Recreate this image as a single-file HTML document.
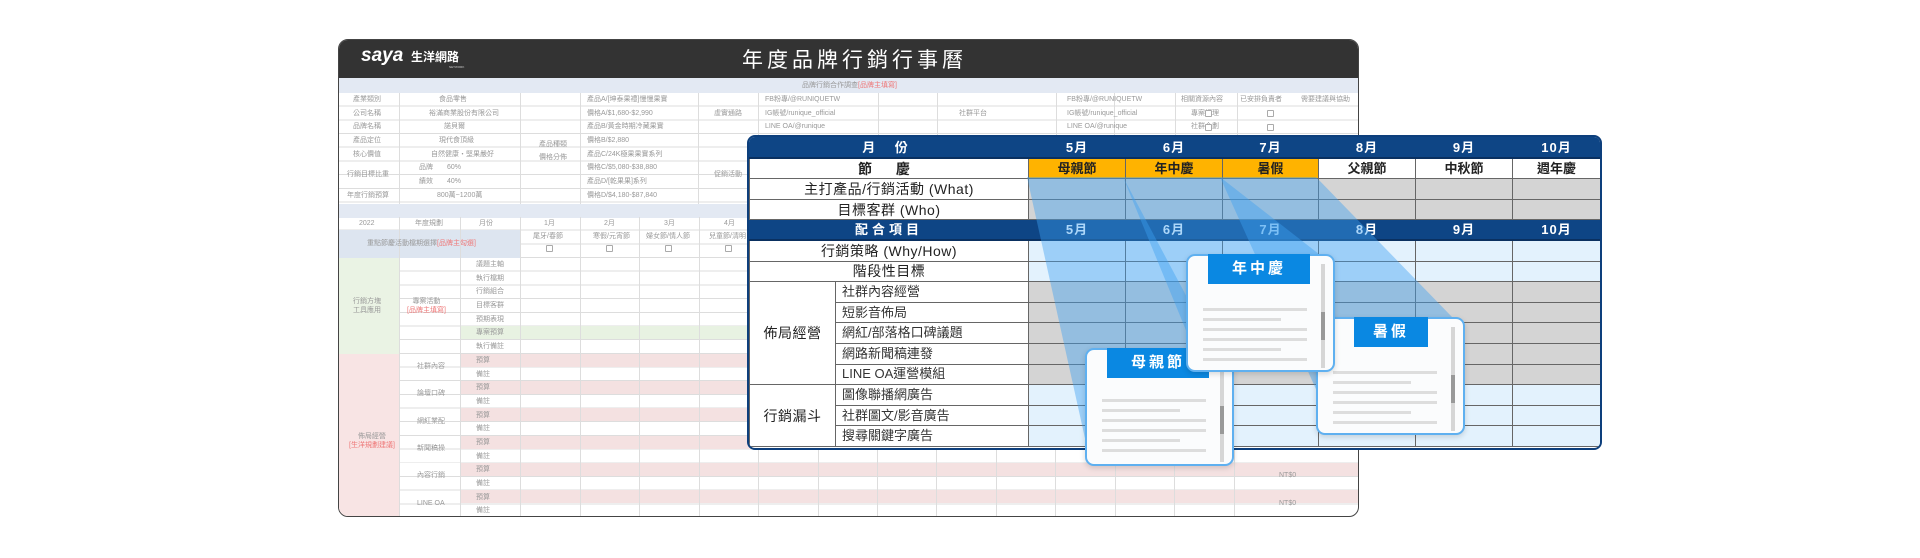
<!DOCTYPE html>
<html><head><meta charset="utf-8">
<style>
*{margin:0;padding:0;box-sizing:border-box}
body{width:1920px;height:558px;background:#fff;position:relative;overflow:hidden;font-family:"Liberation Sans","Noto Sans CJK TC",sans-serif}
.a{position:absolute}
#back{left:338px;top:39px;width:1021px;height:478px;border:1px solid #444;border-radius:10px;overflow:hidden;background:#fff}
#hdr{left:0;top:0;width:100%;height:38px;background:#333}
.t{position:absolute;font-size:7px;color:#999;white-space:nowrap;line-height:13px}
.tr{color:#e77}
.grid{background-image:repeating-linear-gradient(to bottom,transparent 0,transparent 12.7px,#ddd 12.7px,#ddd 13.68px)}
.vl{position:absolute;width:1px;background:#ddd}
.cb{position:absolute;width:7px;height:7px;border:1px solid #aaa;border-radius:1px;background:#fff}
#front{left:747px;top:135px;width:855px;height:315px;border:2px solid #0d3f7c;border-radius:8px;overflow:hidden;background:#fff}
table{border-collapse:collapse;table-layout:fixed;width:851px}
tr{height:20.6px}
td{border:1px solid #666;height:20.6px;font-size:13px;color:#222;text-align:center;padding:0;white-space:nowrap;line-height:16px;overflow:hidden}
tr.nv td{background:#0e4585;color:#fff;font-weight:bold;letter-spacing:1px;border-color:#0e4585;border-bottom:2px solid #0a3060}
td.g{background:#d4d4d4}
td.b{background:#e3f2fd}
td.o{background:#ffb300;font-weight:bold}
td.s{text-align:left;padding-left:6px;color:#333}
td.L{font-size:14px;letter-spacing:.5px}
.card{position:absolute;width:149px;height:118px;background:#fbfcfd;border:2px solid #5fb0f0;border-radius:9px;box-shadow:0 2px 6px rgba(0,0,0,.15)}
.tab{position:absolute;left:20px;top:-2px;width:102px;height:30px;background:#0a88e2;color:#fff;font-weight:bold;font-size:15px;letter-spacing:3px;text-align:center;line-height:30px}
.ln{position:absolute;left:15px;height:3px;background:#ddd}
.sb{position:absolute;right:8px;top:8px;width:4px;height:104px;background:#d6d6d6}
.sb i{position:absolute;left:0;top:48px;width:4px;height:28px;background:#999}
</style></head><body>

<div id="back" class="a">
 <div id="hdr" class="a">
  <div class="a" style="left:22px;top:5px;color:#fff;font-weight:bold;font-size:19px;font-style:italic">saya</div>
  <div class="a" style="left:72px;top:8px;color:#fff;font-weight:bold;font-size:12px">生洋網路</div>
  <div class="a" style="left:110px;top:25px;color:#ccc;font-size:3px">NETWORK</div>
  <div class="a" style="left:0;width:1021px;top:4px;text-align:center;color:#fff;font-size:21px;letter-spacing:4px;padding-left:10px">年度品牌行銷行事曆</div>
 </div>
 <div class="a" style="left:0;top:38px;width:1021px;height:15px;background:#e3e9f3"></div>
 <div class="t" style="left:0;width:1021px;text-align:center;top:39px">品牌行銷合作調查<span class="tr">[品牌主填寫]</span></div>
 <div class="a grid" style="left:0;top:53px;width:1021px;height:111px"></div>
 <div class="vl" style="left:60px;top:53px;height:111px"></div>
 <div class="vl" style="left:181px;top:53px;height:111px"></div>
 <div class="vl" style="left:241px;top:53px;height:111px"></div>
 <div class="vl" style="left:359px;top:53px;height:111px"></div>
 <div class="vl" style="left:419px;top:53px;height:111px"></div>
 <div class="vl" style="left:539px;top:53px;height:111px"></div>
 <div class="vl" style="left:598px;top:53px;height:111px"></div>
 <div class="vl" style="left:717px;top:53px;height:111px"></div>
 <div class="vl" style="left:775px;top:53px;height:111px"></div>
 <div class="vl" style="left:836px;top:53px;height:111px"></div>
 <div class="vl" style="left:898px;top:53px;height:111px"></div>
 <div class="t" style="left:14px;top:53px">產業類別</div><div class="t" style="left:100px;top:53px">食品零售</div>
 <div class="t" style="left:14px;top:67px">公司名稱</div><div class="t" style="left:90px;top:67px">裕滿商業股份有限公司</div>
 <div class="t" style="left:14px;top:80px">品牌名稱</div><div class="t" style="left:105px;top:80px">諾貝爾</div>
 <div class="t" style="left:14px;top:94px">產品定位</div><div class="t" style="left:100px;top:94px">現代食頂級</div>
 <div class="t" style="left:14px;top:108px">核心價值</div><div class="t" style="left:92px;top:108px">自然健康・堅果嚴好</div>
 <div class="t" style="left:8px;top:128px">行銷目標比重</div><div class="t" style="left:80px;top:121px">品牌　　60%</div><div class="t" style="left:80px;top:135px">績效　　40%</div>
 <div class="t" style="left:8px;top:149px">年度行銷預算</div><div class="t" style="left:98px;top:149px">800萬~1200萬</div>
 <div class="t" style="left:200px;top:98px">產品種類<br>價格分佈</div>
 <div class="t" style="left:248px;top:53px;line-height:13.68px">產品A/[坤泰果禮]慢慢果實<br>價格A/$1,680-$2,990<br>產品B/黃金時期冷藏果實<br>價格B/$2,880<br>產品C/24K極果果實系列<br>價格C/$5,080-$38,880<br>產品D/[乾果果]系列<br>價格D/$4,180-$87,840</div>
 <div class="t" style="left:375px;top:67px">虛實通路</div><div class="t" style="left:375px;top:128px">促銷活動</div>
 <div class="t" style="left:426px;top:53px;line-height:13.68px">FB粉專/@RUNIQUETW<br>IG帳號/runique_official<br>LINE OA/@runique</div>
 <div class="t" style="left:620px;top:67px">社群平台</div>
 <div class="t" style="left:728px;top:53px;line-height:13.68px">FB粉專/@RUNIQUETW<br>IG帳號/runique_official<br>LINE OA/@runique</div>
 <div class="t" style="left:842px;top:53px">相關資源內容</div><div class="t" style="left:852px;top:67px">專案經理</div><div class="t" style="left:852px;top:80px">社群企劃</div>
 <div class="t" style="left:901px;top:53px">已安排負責者</div><div class="t" style="left:962px;top:53px">需要建議與協助</div>
 <div class="cb" style="left:866px;top:70px"></div><div class="cb" style="left:866px;top:84px"></div>
 <div class="cb" style="left:928px;top:70px"></div><div class="cb" style="left:928px;top:84px"></div>
 <div class="a" style="left:0;top:164px;width:1021px;height:14px;background:#e3e9f3"></div>
 <div class="a grid" style="left:0;top:177px;width:1021px;height:301px"></div>
 <div class="a" style="left:0;top:190px;width:181px;height:28px;background:#dde5f0"></div>
 <div class="a" style="left:0;top:218px;width:60px;height:96px;background:#eaf3e4"></div>
 <div class="a" style="left:0;top:314px;width:60px;height:164px;background:#f8e4e4"></div>
 <div class="a" style="left:121px;top:286px;width:900px;height:13px;background:#e8f2e2"></div>
 <div class="a" style="left:121px;top:314px;width:900px;height:13px;background:#f4e1e1"></div>
 <div class="a" style="left:121px;top:341px;width:900px;height:13px;background:#f4e1e1"></div>
 <div class="a" style="left:121px;top:368px;width:900px;height:13px;background:#f4e1e1"></div>
 <div class="a" style="left:121px;top:396px;width:900px;height:13px;background:#f4e1e1"></div>
 <div class="a" style="left:121px;top:423px;width:900px;height:13px;background:#f4e1e1"></div>
 <div class="a" style="left:121px;top:450px;width:900px;height:13px;background:#f4e1e1"></div>
 <div class="vl" style="left:60px;top:177px;height:301px"></div>
 <div class="vl" style="left:121px;top:177px;height:301px"></div>
 <div class="vl" style="left:181px;top:177px;height:301px"></div>
 <div class="vl" style="left:241px;top:177px;height:301px"></div>
 <div class="vl" style="left:300px;top:177px;height:301px"></div>
 <div class="vl" style="left:360px;top:177px;height:301px"></div>
 <div class="vl" style="left:419px;top:177px;height:301px"></div>
 <div class="vl" style="left:479px;top:177px;height:301px"></div>
 <div class="vl" style="left:538px;top:177px;height:301px"></div>
 <div class="vl" style="left:597px;top:177px;height:301px"></div>
 <div class="vl" style="left:657px;top:177px;height:301px"></div>
 <div class="vl" style="left:716px;top:177px;height:301px"></div>
 <div class="vl" style="left:776px;top:177px;height:301px"></div>
 <div class="vl" style="left:835px;top:177px;height:301px"></div>
 <div class="vl" style="left:895px;top:177px;height:301px"></div>
 <div class="t" style="left:20px;top:177px">2022</div><div class="t" style="left:76px;top:177px">年度規劃</div><div class="t" style="left:140px;top:177px">月份</div>
 <div class="t" style="left:205px;top:177px">1月</div><div class="t" style="left:265px;top:177px">2月</div><div class="t" style="left:325px;top:177px">3月</div><div class="t" style="left:385px;top:177px">4月</div>
 <div class="t" style="left:194px;top:190px">尾牙/春節</div><div class="t" style="left:254px;top:190px">寒假/元宵節</div><div class="t" style="left:307px;top:190px">婦女節/情人節</div><div class="t" style="left:370px;top:190px">兒童節/清明</div>
 <div class="cb" style="left:207px;top:205px"></div><div class="cb" style="left:267px;top:205px"></div><div class="cb" style="left:326px;top:205px"></div><div class="cb" style="left:386px;top:205px"></div>
 <div class="t" style="left:28px;top:197px">重點節慶活動檔期選擇<span class="tr">[品牌主勾選]</span></div>
 <div class="t" style="left:137px;top:218px;line-height:13.68px">議題主軸<br>執行檔期<br>行銷組合<br>目標客群<br>預期表現<br>專案預算<br>執行備註<br>預算<br>備註<br>預算<br>備註<br>預算<br>備註<br>預算<br>備註<br>預算<br>備註<br>預算<br>備註</div>
 <div class="t" style="left:14px;top:257px;line-height:9px">行銷方塊<br>工具應用</div>
 <div class="t" style="left:68px;top:257px;line-height:9px;text-align:center">專案活動<br><span class="tr">[品牌主填寫]</span></div>
 <div class="t" style="left:10px;top:392px;line-height:9px;text-align:center">佈局經營<br><span class="tr">[生洋規劃建議]</span></div>
 <div class="t" style="left:78px;top:320px">社群內容</div><div class="t" style="left:78px;top:347px">論壇口碑</div><div class="t" style="left:78px;top:375px">網紅業配</div><div class="t" style="left:78px;top:402px">新聞稿操</div><div class="t" style="left:78px;top:429px">內容行銷</div><div class="t" style="left:78px;top:457px">LINE OA</div>
 <div class="t" style="left:940px;top:429px">NT$0</div><div class="t" style="left:940px;top:457px">NT$0</div>
</div>

<div id="front" class="a">
<table>
<colgroup><col style="width:86px"><col style="width:193px"><col style="width:97px"><col style="width:97px"><col style="width:96px"><col style="width:97px"><col style="width:97px"><col style="width:88px"></colgroup>
<tr class="nv"><td colspan="2" style="letter-spacing:8px">月 份</td><td>5月</td><td>6月</td><td>7月</td><td>8月</td><td>9月</td><td>10月</td></tr>
<tr><td colspan="2" class="L" style="letter-spacing:10px;font-weight:bold">節 慶</td><td class="o">母親節</td><td class="o">年中慶</td><td class="o">暑假</td><td style="font-weight:bold">父親節</td><td style="font-weight:bold">中秋節</td><td style="font-weight:bold">週年慶</td></tr>
<tr><td colspan="2" class="L">主打產品/行銷活動 (What)</td><td class="g"></td><td class="g"></td><td class="g"></td><td class="g"></td><td class="g"></td><td class="g"></td></tr>
<tr><td colspan="2" class="L">目標客群 (Who)</td><td class="g"></td><td class="g"></td><td class="g"></td><td class="g"></td><td class="g"></td><td class="g"></td></tr>
<tr class="nv"><td colspan="2" style="letter-spacing:4px">配合項目</td><td>5月</td><td>6月</td><td>7月</td><td>8月</td><td>9月</td><td>10月</td></tr>
<tr><td colspan="2" class="L">行銷策略 (Why/How)</td><td class="b"></td><td class="b"></td><td class="b"></td><td class="b"></td><td class="b"></td><td class="b"></td></tr>
<tr><td colspan="2" class="L">階段性目標</td><td class="b"></td><td class="b"></td><td class="b"></td><td class="b"></td><td class="b"></td><td class="b"></td></tr>
<tr><td rowspan="5" class="L">佈局經營</td><td class="s">社群內容經營</td><td class="g"></td><td class="g"></td><td class="g"></td><td class="g"></td><td class="g"></td><td class="g"></td></tr>
<tr><td class="s">短影音佈局</td><td class="g"></td><td class="g"></td><td class="g"></td><td class="g"></td><td class="g"></td><td class="g"></td></tr>
<tr><td class="s">網紅/部落格口碑議題</td><td class="g"></td><td class="g"></td><td class="g"></td><td class="g"></td><td class="g"></td><td class="g"></td></tr>
<tr><td class="s">網路新聞稿連發</td><td class="g"></td><td class="g"></td><td class="g"></td><td class="g"></td><td class="g"></td><td class="g"></td></tr>
<tr><td class="s">LINE OA運營模組</td><td class="g"></td><td class="g"></td><td class="g"></td><td class="g"></td><td class="g"></td><td class="g"></td></tr>
<tr><td rowspan="3" class="L">行銷漏斗</td><td class="s">圖像聯播網廣告</td><td class="b"></td><td class="b"></td><td class="b"></td><td class="b"></td><td class="b"></td><td class="b"></td></tr>
<tr><td class="s">社群圖文/影音廣告</td><td class="b"></td><td class="b"></td><td class="b"></td><td class="b"></td><td class="b"></td><td class="b"></td></tr>
<tr><td class="s">搜尋關鍵字廣告</td><td class="b"></td><td class="b"></td><td class="b"></td><td class="b"></td><td class="b"></td><td class="b"></td></tr>
</table>
</div>

<svg class="a" style="left:0;top:0" width="1920" height="558">
 <polygon points="1027,177 1123,177 1215,350 1088,452" fill="rgba(60,160,240,0.42)"/>
 <polygon points="1123,177 1220,177 1324,258 1190,340" fill="rgba(60,160,240,0.42)"/>
 <polygon points="1220,177 1316,177 1453,318 1320,398" fill="rgba(60,160,240,0.42)"/>
</svg>

<div class="card" style="left:1085px;top:348px">
 <div class="tab">母親節</div>
 <div class="ln" style="top:49px;width:104px"></div><div class="ln" style="top:59px;width:78px"></div><div class="ln" style="top:69px;width:104px"></div><div class="ln" style="top:79px;width:104px"></div><div class="ln" style="top:89px;width:78px"></div><div class="ln" style="top:99px;width:104px"></div>
 <div class="sb"><i></i></div>
</div>
<div class="card" style="left:1316px;top:317px">
 <div class="tab" style="left:36px;width:74px">暑假</div>
 <div class="ln" style="top:52px;width:104px"></div><div class="ln" style="top:62px;width:78px"></div><div class="ln" style="top:72px;width:104px"></div><div class="ln" style="top:82px;width:104px"></div><div class="ln" style="top:92px;width:78px"></div><div class="ln" style="top:102px;width:104px"></div>
 <div class="sb"><i></i></div>
</div>
<div class="card" style="left:1186px;top:254px">
 <div class="tab">年中慶</div>
 <div class="ln" style="top:52px;width:104px"></div><div class="ln" style="top:62px;width:78px"></div><div class="ln" style="top:72px;width:104px"></div><div class="ln" style="top:82px;width:104px"></div><div class="ln" style="top:92px;width:78px"></div><div class="ln" style="top:102px;width:104px"></div>
 <div class="sb"><i></i></div>
</div>
</body></html>
